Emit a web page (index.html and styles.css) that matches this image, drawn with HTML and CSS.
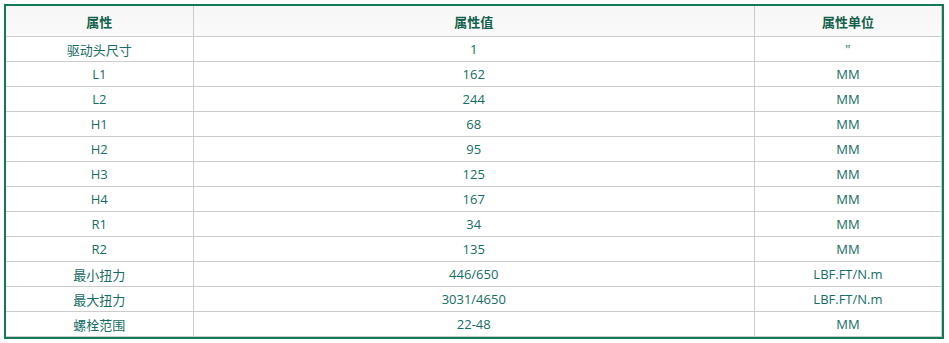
FILE: index.html
```html
<!DOCTYPE html>
<html lang="zh">
<head>
<meta charset="utf-8">
<link rel="stylesheet" href="styles.css">
</head>
<body>
<div class="wrap">
<table class="spec">
<colgroup><col class="c1"><col class="c2"><col class="c3"></colgroup>
<thead>
<tr><th>属性</th><th>属性值</th><th>属性单位</th></tr>
</thead>
<tbody>
<tr><td>驱动头尺寸</td><td>1</td><td>"</td></tr>
<tr><td>L1</td><td>162</td><td>MM</td></tr>
<tr><td>L2</td><td>244</td><td>MM</td></tr>
<tr><td>H1</td><td>68</td><td>MM</td></tr>
<tr><td>H2</td><td>95</td><td>MM</td></tr>
<tr><td>H3</td><td>125</td><td>MM</td></tr>
<tr><td>H4</td><td>167</td><td>MM</td></tr>
<tr><td>R1</td><td>34</td><td>MM</td></tr>
<tr><td>R2</td><td>135</td><td>MM</td></tr>
<tr><td>最小扭力</td><td>446/650</td><td>LBF.FT/N.m</td></tr>
<tr><td>最大扭力</td><td>3031/4650</td><td>LBF.FT/N.m</td></tr>
<tr><td>螺栓范围</td><td>22-48</td><td>MM</td></tr>
</tbody>
</table>
</div>
</body>
</html>
```
FILE: styles.css
```css
html, body {
  margin: 0;
  padding: 0;
  background: #ffffff;
}
body {
  padding: 4px 5px 0 4px;
  font-family: "Open Sans", "Noto Sans CJK SC", sans-serif;
  font-size: 13px;
}
.wrap {
  border: 2px solid #127a58;
  border-top-width: 2px;
}
.spec {
  width: 100%;
  border-collapse: collapse;
  table-layout: fixed;
}
.c1 { width: 20%; }
.c2 { width: 60%; }
.c3 { width: 20%; }
.spec th,
.spec td {
  border: 1px solid #cccccc;
  text-align: center;
  padding: 0;
  font-family: "Open Sans", "Noto Sans CJK SC", sans-serif;
}
.spec tr:first-child th { border-top: none; }
.spec th:first-child, .spec td:first-child { border-left: none; }
.spec th {
  height: 30px;
  font-weight: bold;
  color: #145f4a;
  background: linear-gradient(#f6f6f6, #fafafa);
  font-size: 13px;
}
.spec td {
  height: 24px;
  color: #156d63;
  font-size: 13px;
}
```
